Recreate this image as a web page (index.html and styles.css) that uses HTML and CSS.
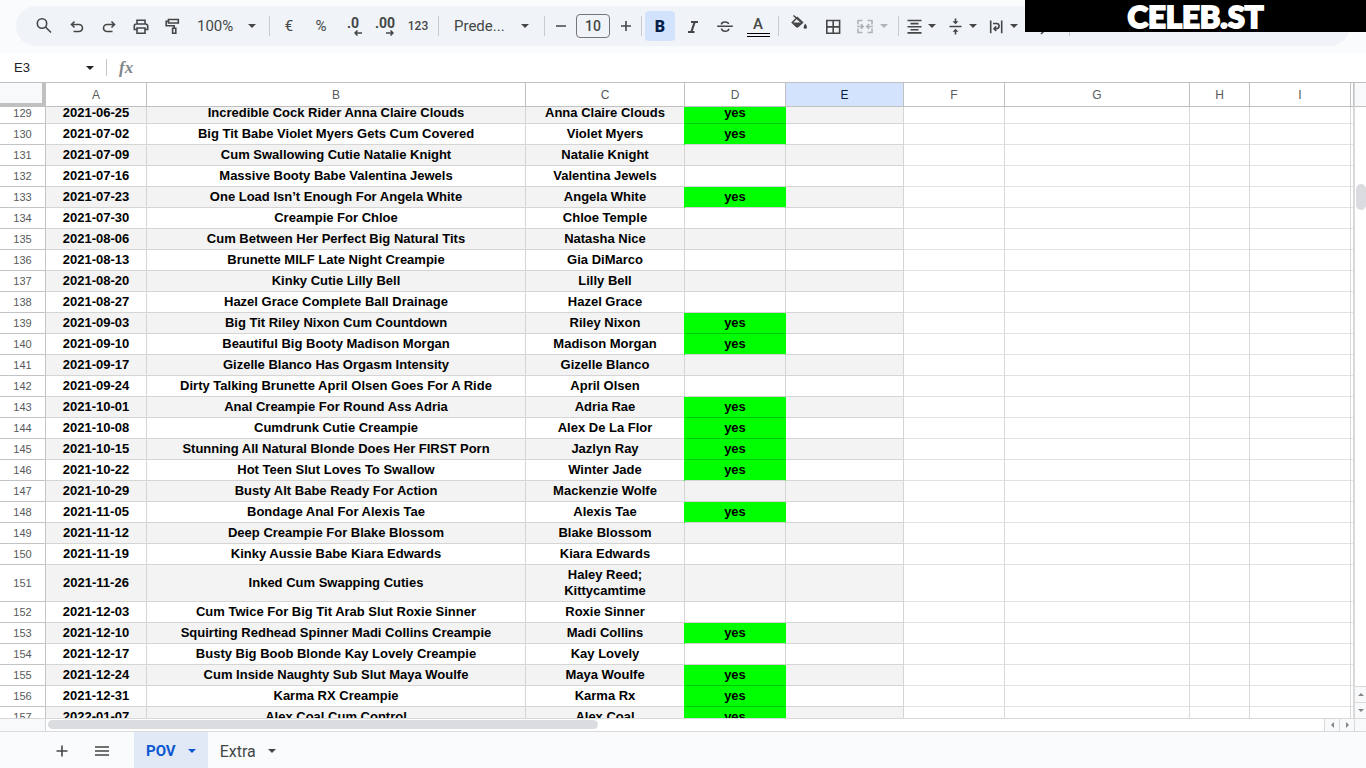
FILE: index.html
```
<!DOCTYPE html>
<html lang="en">
<head>
<meta charset="utf-8">
<title>POV</title>
<link rel="stylesheet" href="styles.css">
</head>
<body>
<header class="top">
<div class="toolbar" role="toolbar" aria-label="Main">
<button class="tool tool-search" aria-label="Search"><svg class="icon" viewBox="0 0 20 20"><circle cx="8" cy="7.500" r="4.700"/><path d="M11.500 11l5.500 5.500"/></svg></button>
<button class="tool" aria-label="Undo"><svg class="icon" viewBox="0 0 20 20"><path d="M7.500 5.500L4.500 8.500l3 3M4.800 8.500H12a3.500 3.500 0 0 1 0 7H6.500"/></svg></button>
<button class="tool" aria-label="Redo"><svg class="icon" viewBox="0 0 20 20"><path d="M12.500 5.500l3 3-3 3M15.200 8.500H8a3.500 3.500 0 0 0 0 7h5.500"/></svg></button>
<button class="tool" aria-label="Print"><svg class="icon" viewBox="0 0 20 20"><path d="M6 7.500V4.200h8V7.500M6 13.500H3.300V10A2 2 0 0 1 5.300 8h9.400a2 2 0 0 1 2 2V13.500H14M6 12h8v5.200H6z"/></svg></button>
<button class="tool" aria-label="Paint format"><svg class="icon" viewBox="0 0 20 20"><path d="M5.500 3.500h9.800V7H5.500zM5.500 5.200H3.200v4.500h8v2.500M9.600 12.200h3.200v5H9.600z"/></svg></button>
<button class="tool tool-zoom">100%<i class="arrow"></i></button>
<span class="sep"></span>
<button class="tool tool-text">€</button>
<button class="tool tool-text">%</button>
<button class="tool tool-dec" aria-label="Decrease decimal places">.0<svg class="dec-arrow" viewBox="0 0 8 6"><path d="M8 3H1M3.500 .5L1 3l2.500 2.500"/></svg></button>
<button class="tool tool-dec" aria-label="Increase decimal places">.00<svg class="dec-arrow" viewBox="0 0 8 6"><path d="M0 3h7M4.500 .5L7 3 4.500 5.500"/></svg></button>
<button class="tool tool-number">123</button>
<span class="sep"></span>
<button class="tool tool-font">Prede...<i class="arrow"></i></button>
<span class="sep"></span>
<button class="tool tool-step" aria-label="Decrease font size"><svg class="icon" viewBox="0 0 20 20"><path d="M5 10h10"/></svg></button>
<input class="size" aria-label="Font size" value="10">
<button class="tool tool-step" aria-label="Increase font size"><svg class="icon" viewBox="0 0 20 20"><path d="M5 10h10M10 5v10"/></svg></button>
<span class="sep"></span>
<button class="tool tool-bold" aria-label="Bold">B</button>
<button class="tool" aria-label="Italic"><svg class="icon heavy" viewBox="0 0 20 20"><path d="M8 6h7M5 16h6.500M11.700 6L8.300 16"/></svg></button>
<button class="tool" aria-label="Strikethrough"><svg class="icon" viewBox="0 0 20 20"><path d="M2.200 10.300h15.600M13.500 8c-.3-2.700-7-2.900-7 .4M6.500 12.500c.4 3.800 7.500 3.600 7.200.2"/></svg></button>
<button class="tool tool-wide" aria-label="Text color"><span class="color-letter">A</span></button>
<span class="sep"></span>
<button class="tool tool-wide" aria-label="Fill color"><svg class="icon icon-fill" viewBox="0 0 20 20"><path d="M4.500 1.500L12.500 8.500"/><path d="M8.300 3.500l5.200 5-4.700 4.200a1 1 0 0 1-1.200 0L3.300 8.500z"/><path class="solid" d="M4 8.600h9.200l-5 4.400z"/><path class="solid" d="M16.300 9.500c3 4 1.300 5.300 0 5.300s-3-1.300 0-5.300z"/></svg></button>
<button class="tool tool-wide" aria-label="Borders"><svg class="icon" viewBox="0 0 20 20"><path d="M3.800 4.500h12.800v12.800H3.800zM10.200 4.500v12.500M4 10.900h12.500"/></svg></button>
<button class="tool tool-duo tool-merge" disabled aria-label="Merge cells"><svg class="icon" viewBox="0 0 20 20"><path d="M7.500 4.500H3v4M3 12.500v4h4.500M12.500 4.500H17v4M17 12.500v4h-4.500M2 10.500h6M5.800 8l2.400 2.500-2.400 2.500M18 10.500h-6M14.200 8l-2.400 2.500 2.400 2.500"/></svg><i class="arrow"></i></button>
<span class="sep"></span>
<button class="tool tool-duo" aria-label="Horizontal align"><svg class="icon" viewBox="0 0 20 20"><path d="M3.500 4.500h14M6.500 7.600h8M3.500 10.700h14M6.500 13.800h8M3.500 16.900h14"/></svg><i class="arrow"></i></button>
<button class="tool tool-duo" aria-label="Vertical align"><svg class="icon" viewBox="0 0 20 20"><path d="M4.500 10.500h12M10.500 2.500v4M10.500 18.500v-4"/><path class="solid" d="M7.500 5.200h6l-3 3zM7.500 15.800h6l-3-3z"/></svg><i class="arrow"></i></button>
<button class="tool tool-duo" aria-label="Text wrapping"><svg class="icon" viewBox="0 0 20 20"><path d="M4.700 4.500v12.700M15.700 4.500v12.700M7 7.500h3.500a2.600 2.600 0 0 1 0 5.200H8.200M10.200 10.400L8 12.700l2.200 2.300"/></svg><i class="arrow"></i></button>
<button class="tool tool-duo" aria-label="Text rotation"><svg class="icon" viewBox="0 0 20 20"><path d="M4 15h13M14 12l3 3-3 3"/></svg><i class="arrow"></i></button>
<span class="sep"></span>
</div>
<div class="banner">CELEB.ST</div>
</header>
<div class="formula">
<button class="name-box">E3<i class="arrow"></i></button>
<label class="fx" for="formula">fx</label>
<input class="formula-input" id="formula">
</div>
<main class="sheet">
<div class="cells">
<table class="grid">
<colgroup><col class="w-head"><col class="w-a"><col class="w-b"><col class="w-c"><col class="w-d"><col class="w-e"><col class="w-f"><col class="w-g"><col class="w-h"><col class="w-i"><col></colgroup>
<thead><tr><td class="corner"></td><th>A</th><th>B</th><th>C</th><th>D</th><th class="active">E</th><th>F</th><th>G</th><th>H</th><th>I</th><th></th></tr></thead>
<tbody>
<tr class="cut"><th>129<td>2021-06-25<td>Incredible Cock Rider Anna Claire Clouds<td>Anna Claire Clouds<td class="yes">yes<td><td><td><td><td><td>
<tr><th>130<td>2021-07-02<td>Big Tit Babe Violet Myers Gets Cum Covered<td>Violet Myers<td class="yes">yes<td><td><td><td><td><td>
<tr><th>131<td>2021-07-09<td>Cum Swallowing Cutie Natalie Knight<td>Natalie Knight<td><td><td><td><td><td><td>
<tr><th>132<td>2021-07-16<td>Massive Booty Babe Valentina Jewels<td>Valentina Jewels<td><td><td><td><td><td><td>
<tr><th>133<td>2021-07-23<td>One Load Isn’t Enough For Angela White<td>Angela White<td class="yes">yes<td><td><td><td><td><td>
<tr><th>134<td>2021-07-30<td>Creampie For Chloe<td>Chloe Temple<td><td><td><td><td><td><td>
<tr><th>135<td>2021-08-06<td>Cum Between Her Perfect Big Natural Tits<td>Natasha Nice<td><td><td><td><td><td><td>
<tr><th>136<td>2021-08-13<td>Brunette MILF Late Night Creampie<td>Gia DiMarco<td><td><td><td><td><td><td>
<tr><th>137<td>2021-08-20<td>Kinky Cutie Lilly Bell<td>Lilly Bell<td><td><td><td><td><td><td>
<tr><th>138<td>2021-08-27<td>Hazel Grace Complete Ball Drainage<td>Hazel Grace<td><td><td><td><td><td><td>
<tr><th>139<td>2021-09-03<td>Big Tit Riley Nixon Cum Countdown<td>Riley Nixon<td class="yes">yes<td><td><td><td><td><td>
<tr><th>140<td>2021-09-10<td>Beautiful Big Booty Madison Morgan<td>Madison Morgan<td class="yes">yes<td><td><td><td><td><td>
<tr><th>141<td>2021-09-17<td>Gizelle Blanco Has Orgasm Intensity<td>Gizelle Blanco<td><td><td><td><td><td><td>
<tr><th>142<td>2021-09-24<td>Dirty Talking Brunette April Olsen Goes For A Ride<td>April Olsen<td><td><td><td><td><td><td>
<tr><th>143<td>2021-10-01<td>Anal Creampie For Round Ass Adria<td>Adria Rae<td class="yes">yes<td><td><td><td><td><td>
<tr><th>144<td>2021-10-08<td>Cumdrunk Cutie Creampie<td>Alex De La Flor<td class="yes">yes<td><td><td><td><td><td>
<tr><th>145<td>2021-10-15<td>Stunning All Natural Blonde Does Her FIRST Porn<td>Jazlyn Ray<td class="yes">yes<td><td><td><td><td><td>
<tr><th>146<td>2021-10-22<td>Hot Teen Slut Loves To Swallow<td>Winter Jade<td class="yes">yes<td><td><td><td><td><td>
<tr><th>147<td>2021-10-29<td>Busty Alt Babe Ready For Action<td>Mackenzie Wolfe<td><td><td><td><td><td><td>
<tr><th>148<td>2021-11-05<td>Bondage Anal For Alexis Tae<td>Alexis Tae<td class="yes">yes<td><td><td><td><td><td>
<tr><th>149<td>2021-11-12<td>Deep Creampie For Blake Blossom<td>Blake Blossom<td><td><td><td><td><td><td>
<tr><th>150<td>2021-11-19<td>Kinky Aussie Babe Kiara Edwards<td>Kiara Edwards<td><td><td><td><td><td><td>
<tr class="tall"><th>151<td>2021-11-26<td>Inked Cum Swapping Cuties<td>Haley Reed;<br>Kittycamtime<td><td><td><td><td><td><td>
<tr><th>152<td>2021-12-03<td>Cum Twice For Big Tit Arab Slut Roxie Sinner<td>Roxie Sinner<td><td><td><td><td><td><td>
<tr><th>153<td>2021-12-10<td>Squirting Redhead Spinner Madi Collins Creampie<td>Madi Collins<td class="yes">yes<td><td><td><td><td><td>
<tr><th>154<td>2021-12-17<td>Busty Big Boob Blonde Kay Lovely Creampie<td>Kay Lovely<td><td><td><td><td><td><td>
<tr><th>155<td>2021-12-24<td>Cum Inside Naughty Sub Slut Maya Woulfe<td>Maya Woulfe<td class="yes">yes<td><td><td><td><td><td>
<tr><th>156<td>2021-12-31<td>Karma RX Creampie<td>Karma Rx<td class="yes">yes<td><td><td><td><td><td>
<tr><th>157<td>2022-01-07<td>Alex Coal Cum Control<td>Alex Coal<td class="yes">yes<td><td><td><td><td><td>
</tbody>
</table>
</div>
<div class="vbar">
<div class="vbar-head"></div>
<div class="vtrack"><div class="vthumb"></div></div>
<button class="vbtn" aria-label="Scroll up"><i class="tri up"></i></button>
<button class="vbtn" aria-label="Scroll down"><i class="tri down"></i></button>
</div>
</main>
<div class="hbar">
<div class="hbar-head"></div>
<div class="htrack"><div class="hthumb"></div></div>
<button class="hbtn" aria-label="Scroll left"><i class="tri left"></i></button>
<button class="hbtn" aria-label="Scroll right"><i class="tri right"></i></button>
<div class="hbar-end"></div>
</div>
<footer class="tabs">
<button class="tab-tool" aria-label="Add sheet"><svg class="icon" viewBox="0 0 20 20"><path d="M4.500 10h11M10 4.500v11"/></svg></button>
<button class="tab-tool" aria-label="All sheets"><svg class="icon" viewBox="0 0 20 20"><path d="M3 6h14M3 10h14M3 14h14"/></svg></button>
<button class="tab selected">POV<i class="arrow"></i></button>
<button class="tab">Extra<i class="arrow"></i></button>
</footer>
</body>
</html>
```
FILE: styles.css
```
* { box-sizing: border-box; }
body {
  margin: 0;
  height: 100vh;
  display: flex;
  flex-direction: column;
  overflow: hidden;
  background: #fff;
  font-family: "Liberation Sans", Arial, sans-serif;
  color: #444746;
}
button, input {
  margin: 0;
  padding: 0;
  border: 0;
  background: none;
  color: inherit;
  font-family: inherit;
}
.top {
  position: relative;
  flex: none;
  padding: 6px 16px 7px;
  background: #f9fbfd;
}
.toolbar {
  display: flex;
  align-items: center;
  height: 40px;
  padding-left: 10px;
  border-radius: 20px;
  background: #f0f4f9;
  overflow: hidden;
  font-family: Roboto, sans-serif;
}
.tool {
  display: flex;
  flex: none;
  align-items: center;
  justify-content: center;
  width: 32px;
  height: 30px;
  border-radius: 4px;
}
.icon {
  flex: none;
  width: 20px;
  height: 20px;
  fill: none;
  stroke: currentColor;
  stroke-width: 1.6;
}
.icon-fill { margin-bottom: 4px; }
.heavy { stroke-width: 2.2; }
.solid { fill: currentColor; stroke: none; }
.arrow {
  flex: none;
  width: 0;
  border: 4px solid transparent;
  border-top-color: currentColor;
  border-bottom: 0;
}
.sep {
  flex: none;
  width: 1px;
  height: 20px;
  margin: 0 3px;
  background: #c7cbd0;
}
.tool-search { width: 35px; }
.tool-wide { width: 34px; }
.tool-zoom {
  width: 77px;
  padding: 0 10px 0 8px;
  justify-content: space-between;
  font-size: 15px;
}
.tool-text { font-size: 15px; }
.tool-dec {
  position: relative;
  align-items: flex-start;
  padding-top: 4px;
  font-size: 14px;
  font-weight: 700;
}
.dec-arrow {
  position: absolute;
  right: 7px;
  bottom: 5px;
  width: 8px;
  height: 6px;
  fill: none;
  stroke: currentColor;
  stroke-width: 1.5;
}
.tool-number { width: 34px; font-size: 12px; font-weight: 500; }
.tool-font {
  width: 99px;
  padding: 0 12px;
  justify-content: space-between;
  font-size: 15px;
}
.tool-step { width: 25px; }
.size {
  flex: none;
  width: 34px;
  height: 24px;
  margin: 0 3px;
  border: 1px solid #747775;
  border-radius: 4px;
  text-align: center;
  font-size: 14px;
  font-weight: 500;
}
.tool-bold {
  width: 30px;
  margin-right: 2px;
  background: #d3e3fd;
  color: #041e49;
  font-size: 16px;
  font-weight: 900;
}
.color-letter {
  width: 23px;
  height: 21px;
  border-bottom: 4px double #000;
  font-size: 15px;
  line-height: 16px;
  font-weight: 500;
}
.tool-duo {
  width: 41px;
  padding: 0 7px 0 2px;
  justify-content: space-between;
}
.tool-merge { width: 45px; padding-left: 5px; color: #b0b3b7; }
.banner {
  position: absolute;
  top: 0;
  right: 0;
  width: 341px;
  height: 32px;
  background: #000;
  color: #fff;
  text-align: center;
  font-family: Lato, sans-serif;
  font-size: 31px;
  font-weight: 900;
  line-height: 32px;
  -webkit-text-stroke: 2px #fff;
}
.formula {
  display: flex;
  flex: none;
  align-items: center;
  height: 30px;
  border-bottom: 1px solid #c0c0c0;
}
.name-box {
  display: flex;
  align-items: center;
  justify-content: space-between;
  width: 107px;
  height: 17px;
  padding: 0 12px 0 14px;
  border-right: 1px solid #c7c7c7;
  color: #202124;
  font-size: 13px;
}
.fx {
  padding: 0 12px;
  color: #80868b;
  font-family: "Liberation Serif", serif;
  font-size: 17px;
  font-style: italic;
  font-weight: 700;
}
.formula-input { flex: 1; height: 24px; outline: 0; }
.sheet { display: flex; flex: 1; min-height: 0; overflow: hidden; }
.cells { flex: 1; min-width: 0; overflow: hidden; }
.grid {
  width: 100%;
  table-layout: fixed;
  border-collapse: separate;
  border-spacing: 0;
}
.w-head { width: 46px; }
.w-a { width: 101px; }
.w-b { width: 379px; }
.w-c { width: 159px; }
.w-d { width: 101px; }
.w-e { width: 118px; }
.w-f { width: 101px; }
.w-g { width: 185px; }
.w-h { width: 60px; }
.w-i { width: 101px; }
.grid th, .grid td {
  height: 21px;
  padding: 0;
  border-right: 1px solid #d9d9d9;
  border-bottom: 1px solid #e1e1e1;
  text-align: center;
  vertical-align: middle;
  white-space: nowrap;
}
.grid td {
  color: #000;
  font-size: 13px;
  font-weight: 700;
  line-height: 16px;
}
.grid th {
  border-color: #c4c4c4;
  color: #575a5a;
  font-size: 11px;
  font-weight: 400;
  line-height: 16px;
}
.grid thead th, .grid thead td {
  height: 24px;
  border-color: #c0c0c0;
  font-size: 12px;
}
.grid thead .active { background: #d3e3fd; color: #041e49; }
.grid thead .corner {
  border-right: 4px solid #c0c0c0;
  border-bottom: 4px solid #c0c0c0;
  background: #f8f9fa;
}
.grid tbody td:nth-child(-n+6) { border-color: #d5d5d5; }
.grid tbody tr:nth-child(odd) td:nth-child(-n+6) { background: #f3f3f3; }
.grid tbody tr:nth-child(n) td.yes:nth-child(5) {
  background: #0f0;
  border-right-color: #0f0;
  box-shadow: -1px 0 0 #0f0;
}
/* Neighbouring green cells share a green rule. */
.grid tbody tr:has(+ tr .yes) td.yes:nth-child(5) { border-bottom-color: #00c800; }
.grid .cut th, .grid .cut td {
  height: 17px;
  padding-bottom: 4px;
  line-height: 12px;
}
.grid .tall th, .grid .tall td { height: 37px; }
.vbar {
  display: flex;
  flex: none;
  flex-direction: column;
  width: 12px;
  border-left: 1px solid #d9d9d9;
}
.vbar-head {
  height: 24px;
  border-bottom: 1px solid #c0c0c0;
  background: #f8f9fa;
}
.vtrack { flex: 1; padding: 77px 0 0 1px; }
.vthumb { height: 26px; border-radius: 5px; background: #dadce0; }
.vbtn, .hbtn {
  display: flex;
  flex: none;
  align-items: center;
  justify-content: center;
  background: #f8f9fa;
}
.vbtn { height: 16px; border-top: 1px solid #d9d9d9; }
.tri { border: 3px solid transparent; }
.up { border-top: 0; border-bottom-color: #80868b; }
.down { border-bottom: 0; border-top-color: #80868b; }
.left { border-left: 0; border-right-color: #80868b; }
.right { border-right: 0; border-left-color: #80868b; }
.hbar {
  display: flex;
  flex: none;
  height: 14px;
  border-top: 1px solid #d9d9d9;
  border-bottom: 1px solid #d9d9d9;
}
.hbar-head { width: 46px; border-right: 1px solid #d9d9d9; background: #f8f9fa; }
.htrack { flex: 1; padding: 1px 2px; }
.hthumb { width: 550px; height: 9px; border-radius: 5px; background: #dadce0; }
.hbtn { width: 15px; border-left: 1px solid #d9d9d9; }
.hbar-end { width: 12px; border-left: 1px solid #d9d9d9; background: #f8f9fa; }
.tabs {
  display: flex;
  flex: none;
  height: 36px;
  padding-left: 42px;
  background: #f9fbfd;
  font-family: Roboto, sans-serif;
}
.tab-tool {
  display: flex;
  align-items: center;
  justify-content: center;
  width: 40px;
  padding-top: 2px;
}
.tab-tool + .tab { margin-left: 12px; }
.tab {
  display: flex;
  align-items: center;
  gap: 12px;
  padding: 2px 12px 0;
  font-size: 16px;
}
.tab.selected { background: #e1e9f7; color: #0b57d0; font-size: 15px; font-weight: 700; }
```
